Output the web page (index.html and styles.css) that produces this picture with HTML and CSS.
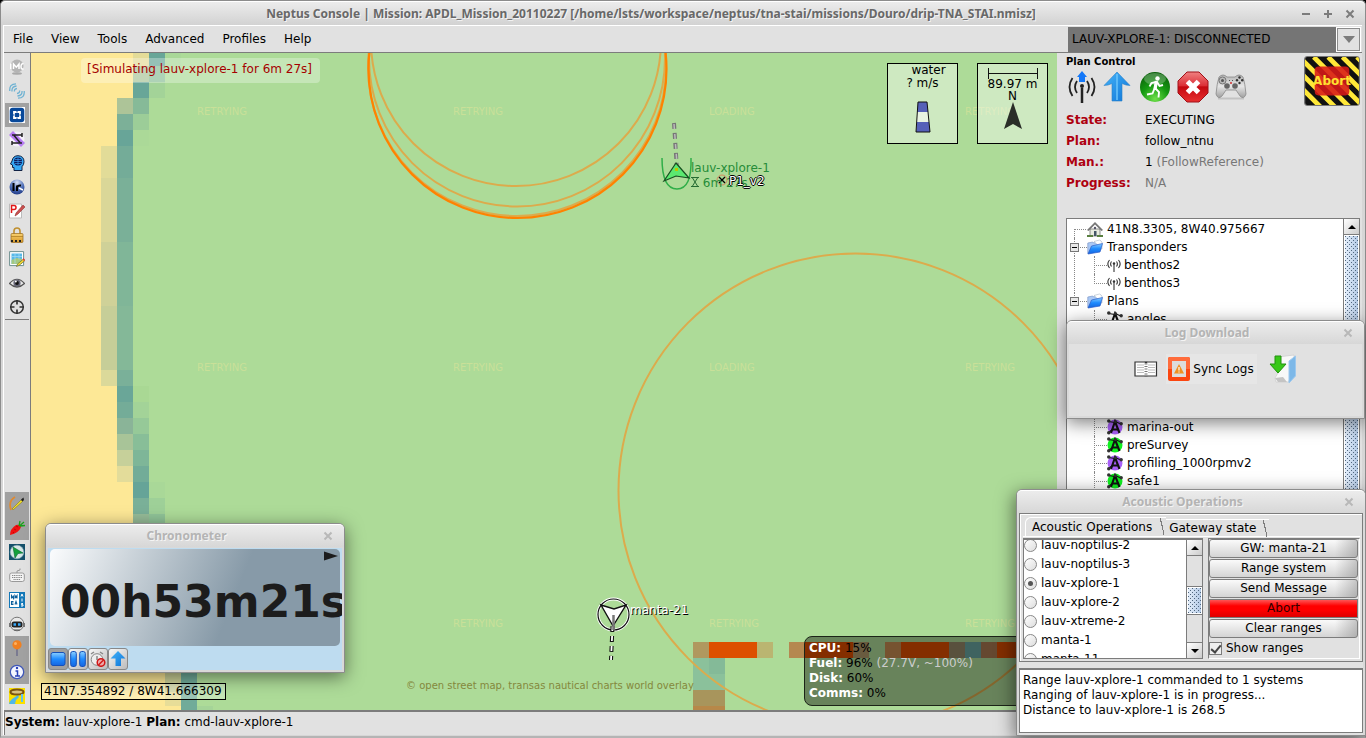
FILE: index.html
```html
<!DOCTYPE html>
<html lang="en">
<head>
<meta charset="utf-8">
<title>Neptus Console</title>
<link rel="stylesheet" href="styles.css">
</head>
<body>
<svg class="defs" aria-hidden="true">
  <defs>
    <linearGradient id="blue" x1="0" y1="0" x2="0" y2="1"><stop offset="0" stop-color="#8cd0ff"/><stop offset=".5" stop-color="#1f8cff"/><stop offset="1" stop-color="#1565e0"/></linearGradient>
    <linearGradient id="sky" x1="0" y1="0" x2="1" y2="1"><stop offset="0" stop-color="#45b4f8"/><stop offset="1" stop-color="#0d74d8"/></linearGradient>
    <linearGradient id="gold" x1="0" y1="0" x2="0" y2="1"><stop offset="0" stop-color="#f8d070"/><stop offset="1" stop-color="#d89a28"/></linearGradient>
    <radialGradient id="green" cx=".5" cy=".9" r=".9"><stop offset="0" stop-color="#6fe04a"/><stop offset=".5" stop-color="#159a12"/><stop offset="1" stop-color="#0a5f0a"/></radialGradient>
    <linearGradient id="red" x1="0" y1="0" x2="0" y2="1"><stop offset="0" stop-color="#f08080"/><stop offset=".45" stop-color="#dc3038"/><stop offset=".5" stop-color="#c40810"/><stop offset="1" stop-color="#e83030"/></linearGradient>
    <linearGradient id="pad" x1="0" y1="0" x2="0" y2="1"><stop offset="0" stop-color="#b4b4b4"/><stop offset=".5" stop-color="#e6e6e6"/><stop offset="1" stop-color="#a0a0a0"/></linearGradient>
    <radialGradient id="orb" cx=".5" cy=".2" r=".9"><stop offset="0" stop-color="#d8e2f5"/><stop offset=".5" stop-color="#5070b8"/><stop offset="1" stop-color="#122a78"/></radialGradient>
    <pattern id="hazard" width="11" height="11" patternUnits="userSpaceOnUse" patternTransform="rotate(-45)"><path d="M0 0h11v6H0z" fill="#111"/><path d="M0 6h11v5H0z" fill="#ffe838"/></pattern>
    <symbol id="i-folder" viewBox="0 0 16 16"><path d="M.8 14.500V4l5-1 1 1 7-2v9z" fill="#a9c8f4" stroke="#7d98c8" stroke-width=".7"/><path d="M7 2.500l5.500-1.500 2.500 2v7z" fill="#fff" stroke="#9ab" stroke-width=".5"/><path d="M1 15l3.500-8 11-2.500-2.500 8.500z" fill="url(#blue)" stroke="#2a5cc8" stroke-width=".7"/></symbol>
    <symbol id="i-trans" viewBox="0 0 14 14"><g fill="none" stroke="#333" stroke-width="1.100"><path d="M7 6v8"/><path d="M4.500 3.500q-1.800 2.500 0 5M9.500 3.500q1.800 2.500 0 5M2.500 2Q-.8 6 2.500 10M11.500 2q3.300 4 0 8"/></g><circle cx="7" cy="5.500" r="1.200" fill="#333"/></symbol>
    <symbol id="i-plan" viewBox="0 0 16 16"><path d="M4 14L8 2.500 12.500 14M5.500 10.500h6" fill="none" stroke="#111" stroke-width="2.100"/><path d="M1.500 2.500L8 3.500M1.500 13.500l4-3M9 3l5 2" fill="none" stroke="#111" stroke-width="1.100"/><g fill="#333"><circle cx="1.800" cy="2" r="1.800"/><circle cx="8.500" cy="2.500" r="1.600"/><circle cx="14.200" cy="4.800" r="1.700"/><circle cx="1.800" cy="13.800" r="1.800"/></g></symbol>
  </defs>
</svg>

<div class="console">
  <header class="titlebar">
    <h1 class="titlebar-text">Neptus Console | Mission: APDL_Mission_20110227 [/home/lsts/workspace/neptus/tna-stai/missions/Douro/drip-TNA_STAI.nmisz]</h1>
    <div class="window-buttons">
      <button aria-label="Minimize"><svg viewBox="0 0 10 10"><path d="M1 5h8"/></svg></button>
      <button aria-label="Maximize"><svg viewBox="0 0 10 10"><path d="M1 5h8M5 1v8"/></svg></button>
      <button aria-label="Close"><svg viewBox="0 0 10 10"><path d="M1.500 1.500l7 7M8.500 1.500l-7 7"/></svg></button>
    </div>
  </header>

  <div class="frame">
    <nav class="menubar">
      <button>File</button><button>View</button><button>Tools</button><button>Advanced</button><button>Profiles</button><button>Help</button>
      <div class="combo">
        <select aria-label="Vehicle"><option>LAUV-XPLORE-1: DISCONNECTED</option></select>
        <span class="combo-arrow"></span>
      </div>
    </nav>

    <div class="workspace">
      <div class="toolbar">
        <div class="tool-group">
          <button aria-label="IMC"><svg viewBox="0 0 16 16"><circle cx="8" cy="7" r="6.500" fill="#b4b4b4"/><ellipse cx="8" cy="14.500" rx="5" ry="1.200" fill="#a9a9a9"/><path d="M1.800 4.500v5.500M4.500 10V5l2.800 3.200L10 5v5M14.500 4.800q-2.500-.6-2.500 2.600t2.500 2.600" fill="none" stroke="#fff" stroke-width="1.500"/></svg></button>
          <button aria-label="Signals"><svg viewBox="0 0 16 16"><g fill="none" stroke="#6fb2d2" stroke-width="1.300"><path d="M.8 8Q0 1 7 .8M3 8.500Q2.500 3.500 7.500 3M5.500 8.500Q5 6 8 5.500M15.200 8q.8 7-6.200 7.200M13 8q.5 4.500-4.500 5M10.500 7.500q.5 2.500-2.500 3"/></g></svg></button>
          <button class="on" aria-label="Map"><svg viewBox="0 0 16 16"><path d="M0 0h16v16H0z" fill="#fff"/><rect x=".7" y=".7" width="14.600" height="14.600" rx="3" fill="#07489a"/><path d="M5 5h6v6H5z" fill="none" stroke="#fff" stroke-width="1.800"/><path d="M7.500 3.500h1v2h-1zM7.500 10.500h1v2h-1zM3.500 7.500h2v1h-2zM10.500 7.500h2v1h-2z" fill="#07489a"/></svg></button>
          <button aria-label="Plan editor"><svg viewBox="0 0 16 16"><circle cx="8" cy="8" r="7.500" fill="#f4f0fa"/><path d="M0 4l4-4 12 12-4 4z" fill="#b67cf2"/><path d="M3 4h10M5 4.500l6 7M3 12h10M3 10v4M13 2v4" stroke="#222" stroke-width="1.500" fill="none"/></svg></button>
          <button aria-label="Mind"><svg viewBox="0 0 16 16"><path d="M5 15.500v-3H3.500V10L1.500 9l1.500-3Q4 .7 9 .7q6 .3 6 6 0 3-2 5v3.800z" fill="#35a8f5" stroke="#124" stroke-width="1"/><circle cx="9" cy="6.500" r="4" fill="#0a1858"/><path d="M5 6.500h8M9 2.500v8M6 4.500h6M6 8.500h6" stroke="#3a9cf0" stroke-width=".7"/></svg></button>
          <button aria-label="Iridium"><svg viewBox="0 0 16 16"><circle cx="8" cy="8" r="7.500" fill="url(#orb)"/><path d="M4.500 4v8M8 12V6.500M8 8q1-2 4-1.500" stroke="#000" stroke-width="2" fill="none"/><path d="M10 9l4 2" stroke="#fff" stroke-width="1.500"/></svg></button>
          <button aria-label="Parameters"><svg viewBox="0 0 16 16"><path d="M.5 1h12v14H.5z" fill="#fff" stroke="#bbb"/><path d="M2.500 10V2.500H5q2 0 2 2t-2 2H3" fill="none" stroke="#e01818" stroke-width="1.500"/><path d="M6 13l1-3 7-8 2 2-7 7z" fill="#c85050" stroke="#933" stroke-width=".6"/></svg></button>
          <button aria-label="Lock"><svg viewBox="0 0 16 16"><path d="M5 7V4q0-3 3-3t3 3v3" fill="none" stroke="#c09030" stroke-width="1.600"/><rect x="2" y="6.500" width="12" height="9" rx="1" fill="url(#gold)" stroke="#96691c" stroke-width=".7"/><path d="M2 9.500h12" stroke="#a87820" stroke-width=".7"/><path d="M2 14h12" stroke="#222" stroke-width="1.800" stroke-dasharray="2 2"/></svg></button>
          <button aria-label="Map edit"><svg viewBox="0 0 16 16"><path d="M.6 .6h14v14H.6z" fill="#fff" stroke="#6f9090"/><path d="M2.500 2.500h10.500v10.500H2.500z" fill="#58b8e8"/><path d="M2.500 9l5-2 5.500 1v5H2.500z" fill="#a4c880"/><path d="M2.500 5.500h10.500M6 2.500v10M10 2.500v6" stroke="#a8dcf6" stroke-width=".7"/><path d="M7.500 15.500l1-2.500 6-5 1.500 1.500-6 5z" fill="#f0dc30" stroke="#553" stroke-width=".6"/><path d="M14 7.800l1.500 1.700" stroke="#e33" stroke-width="1.500"/></svg></button>
          <button aria-label="Eye"><svg viewBox="0 0 16 16"><path d="M.5 8.500Q8 0 15.500 8.500 8 15.500.5 8.500z" fill="#e8e8e8" stroke="#555" stroke-width="1.200"/><circle cx="8" cy="8" r="3.600" fill="#667"/><circle cx="8" cy="8" r="1.900" fill="#111"/><circle cx="6.800" cy="6.600" r="1" fill="#fff"/></svg></button>
          <button aria-label="Target"><svg viewBox="0 0 16 16"><circle cx="8" cy="8" r="6.300" fill="none" stroke="#333" stroke-width="1.500"/><path d="M8 1v4.500M8 10.500V15M1 8h4.500M10.500 8H15" stroke="#333" stroke-width="1.700"/></svg></button>
        </div>
        <div class="tool-group tool-group-low">
          <button class="on" aria-label="Draw"><svg viewBox="0 0 16 16"><path d="M6 1Q-1 5 2 14" fill="none" stroke="#e08a30" stroke-width="1.800"/><path d="M3 13l9-9 1.500 1.500-9 8z" fill="#f2e02a" stroke="#887818" stroke-width=".6"/><path d="M12 3.500L14.500 1.500 15 4l-1.500 1.500z" fill="#222"/></svg></button>
          <button class="on" aria-label="Carrot"><svg viewBox="0 0 16 16"><path d="M1 15Q1 9 7 5q4-1 5 2Q10 13 1 15z" fill="#f01010"/><path d="M10 6l1-5M10.500 6L15 2M11 6l5-.5" stroke="#18a018" stroke-width="1.300"/><path d="M5 9l2 1M7 6l2 1M4 12l1 1" stroke="#a00" stroke-width=".7"/></svg></button>
          <button aria-label="Vehicle"><svg viewBox="0 0 16 16"><path d="M0 0h16v16H0z" fill="#15506a"/><circle cx="8" cy="8" r="6.800" fill="#d6e6e4" stroke="#8ab" stroke-width=".6"/><path d="M4 3l10 6-5 .5L6 14z" fill="#12a03a" stroke="#063" stroke-width=".6"/></svg></button>
          <button aria-label="Keyboard"><svg viewBox="0 0 16 16"><path d="M8 5V3l3-1V.5" fill="none" stroke="#999"/><rect x=".7" y="5" width="14.600" height="8.500" rx="2" fill="#f4f4f4" stroke="#999"/><path d="M3 7.500h10M3 9.500h10M4.500 11.500h7" stroke="#888" stroke-dasharray="1.200 .6"/></svg></button>
          <button aria-label="AIS"><svg viewBox="0 0 16 16"><path d="M0 0h16v16H0z" fill="#1478b8"/><path d="M1 1h9v14H1z" fill="#fff"/><path d="M2.500 6.500V3.500l2 3v-3M6 6.500v-3l1 1.500 1-1.500v3M4.500 9.500h-2v3h2M2.500 11h2M6 12.500l1-3 1 3" fill="none" stroke="#0c5f9c" stroke-width="1.100"/><path d="M12 4.500l1-2.500 1 2.500M13 6.500v3M14 11.500h-1.500v1.200H14V14h-2" fill="none" stroke="#fff"/></svg></button>
          <button aria-label="Robot"><svg viewBox="0 0 16 16"><circle cx="8" cy="8" r="6.800" fill="#e9e9e9" stroke="#777"/><path d="M0 7h2v4H0zM14 7h2v4h-2z" fill="#777"/><rect x="2.500" y="5.500" width="11" height="6" rx="2.500" fill="#222"/><path d="M4.500 8.500h2.500M9 8.500h2.500" stroke="#38a8f8" stroke-width="2.400"/><path d="M5 14h6" stroke="#555"/></svg></button>
          <button class="on" aria-label="Pin"><svg viewBox="0 0 16 16"><path d="M8 8v8" stroke="#668" stroke-width="1.300"/><circle cx="8" cy="4.800" r="4.600" fill="#f08020"/><circle cx="6.500" cy="3.500" r="1.500" fill="#ffb060"/></svg></button>
          <button class="on" aria-label="Info"><svg viewBox="0 0 16 16"><circle cx="8" cy="8" r="6.700" fill="#f4f6ff" stroke="#4058b8" stroke-width="1.300"/><path d="M6.500 7H8.500v5M6 12h5" stroke="#2840b8" stroke-width="1.500" fill="none"/><circle cx="8" cy="4" r="1.200" fill="#2840b8"/></svg></button>
          <button aria-label="Ring"><svg viewBox="0 0 16 16"><path d="M0 0h16v16H0z" fill="#fae000"/><path d="M9 7L3 11q-3 3-3 5h6l1-4 3-3z" fill="#50b8e8"/><ellipse cx="8" cy="4" rx="6.500" ry="2.600" fill="#d8c080" stroke="#7a5410" stroke-width="2"/><path d="M13 6v8" stroke="#60c0f0" stroke-width="2"/></svg></button>
        </div>
      </div>

      <main class="map">
        <svg class="chart" aria-hidden="true">
          <g transform="translate(-31 -53)">
            <path d="M31 53h118v13h-16v32h-16v48h-16v240h16v96h16v60h32v148h16v20H31z" fill="#fde896"/>
            <g shape-rendering="crispEdges">
              <path d="M133 53h16v13h-16z" fill="#e4dc98"/><path d="M149 53h16v13h-16z" fill="#68a698"/><path d="M165 53h16v13h-16z" fill="#a9d898"/>
              <path d="M133 66h16v16h-16z" fill="#a9c498"/><path d="M149 66h16v16h-16z" fill="#8bbf98"/>
              <path d="M133 82h16v16h-16z" fill="#68a698"/><path d="M149 82h16v16h-16z" fill="#a3d398"/>
              <path d="M117 98h16v16h-16z" fill="#adc498"/><path d="M133 98h16v16h-16z" fill="#86ba98"/>
              <path d="M117 114h16v16h-16z" fill="#7cb098"/><path d="M133 114h16v16h-16z" fill="#9ccd98"/>
              <path d="M117 130h16v16h-16z" fill="#68a598"/><path d="M133 130h16v16h-16z" fill="#abd998"/>
              <path d="M101 146h16v32h-16z" fill="#e2dc98"/><path d="M117 146h16v32h-16z" fill="#74ac98"/>
              <path d="M101 178h16v64h-16z" fill="#dad798"/><path d="M117 178h16v64h-16z" fill="#7ab098"/>
              <path d="M101 242h16v64h-16z" fill="#cfd198"/><path d="M117 242h16v64h-16z" fill="#80b698"/>
              <path d="M101 306h16v64h-16z" fill="#c6ce98"/><path d="M117 306h16v64h-16z" fill="#84b898"/>
              <path d="M101 370h16v16h-16z" fill="#dbd99a"/><path d="M117 370h16v16h-16z" fill="#7ab099"/>
              <path d="M117 386h16v16h-16z" fill="#6aa698"/><path d="M133 386h16v16h-16z" fill="#a9d894"/>
              <path d="M117 402h16v16h-16z" fill="#74ac98"/><path d="M133 402h16v16h-16z" fill="#a3d398"/>
              <path d="M117 418h16v16h-16z" fill="#8ab498"/><path d="M133 418h16v16h-16z" fill="#96c998"/>
              <path d="M117 434h16v16h-16z" fill="#a8c498"/><path d="M133 434h16v16h-16z" fill="#88be98"/>
              <path d="M117 450h16v16h-16z" fill="#c6d09a"/><path d="M133 450h16v16h-16z" fill="#7eb698"/>
              <path d="M117 466h16v16h-16z" fill="#e3dc9a"/><path d="M133 466h16v16h-16z" fill="#72ac98"/>
              <path d="M133 482h16v16h-16z" fill="#66a498"/><path d="M149 482h16v16h-16z" fill="#a9d898"/>
              <path d="M133 498h16v16h-16z" fill="#7ab098"/><path d="M149 498h16v16h-16z" fill="#9ed098"/>
              <path d="M133 514h16v16h-16z" fill="#96bc98"/><path d="M149 514h16v16h-16z" fill="#90c498"/>
              <path d="M165 658h16v34h-16z" fill="#cbd097"/><path d="M165 692h16v14h-16z" fill="#e7dd98"/><path d="M181 658h16v53h-16z" fill="#70ab99"/><path d="M197 706h16v5h-16z" fill="#a5d498"/>
              <path d="M693 642h16v16h-16z" fill="#b0985f"/><path d="M709 642h48v16h-48z" fill="#dd5000"/><path d="M757 642h16v16h-16z" fill="#bab571"/>
              <path d="M789 642h16v16h-16z" fill="#b58850"/><path d="M805 642h48v16h-48z" fill="#dd4e00"/><path d="M853 642h16v16h-16z" fill="#b0986a"/>
              <path d="M885 642h16v16h-16z" fill="#c58a50"/><path d="M901 642h48v16h-48z" fill="#dd4e00"/><path d="M949 642h16v16h-16z" fill="#958868"/><path d="M965 642h16v16h-16z" fill="#6aa6a0"/><path d="M981 642h16v16h-16z" fill="#a87850"/><path d="M997 642h60v16h-60z" fill="#dd4e00"/>
              <path d="M693 658h32v32h-32z" fill="#8bc19b"/><path d="M709 658h16v16h-16z" fill="#84ba98"/><path d="M693 690h32v16h-32z" fill="#a8955c"/><path d="M693 706h32v5h-32z" fill="#b78849"/>
            </g>
            <g fill="none" stroke="#dcab4c" stroke-width="2">
              <circle cx="855.500" cy="490.500" r="237"/><circle cx="517" cy="67" r="149"/><circle cx="517" cy="58.500" r="148"/><circle cx="516" cy="41" r="145"/>
            </g>
            <circle cx="517.500" cy="69" r="149" fill="none" stroke="#ff8200" stroke-width="2.200"/>
            <g fill="none" stroke="#777" stroke-width="4"><path d="M674 123l3 47" stroke-dasharray="6 4"/></g>
            <path d="M674 124l3 40" stroke="#bbb" stroke-width="1.500" stroke-dasharray="5 5"/>
            <path d="M662 158q0 31 15 31t14-31" fill="none" stroke="#2fae48" stroke-width="1.500"/>
            <path d="M676 163l-12 18 12-5 13 2z" fill="#5be870" stroke="#174d20" stroke-width="1.200"/>
            <path d="M675 168h3v3h-3z" fill="#b8c800"/>
            <circle cx="722" cy="180" r="5" fill="none" stroke="#d88a60"/><path d="M719 177l6 6M725 177l-6 6" stroke="#000" stroke-width="1.300"/>
            <circle cx="613.500" cy="614.500" r="15.500" fill="none" stroke="#fff" stroke-width="3"/><circle cx="613.500" cy="614.500" r="15.500" fill="none" stroke="#111" stroke-width="1.200"/>
            <path d="M613 616l-2 44" stroke="#111" stroke-width="4" stroke-dasharray="6 4"/><path d="M613 616l-2 44" stroke="#fff" stroke-width="1.800" stroke-dasharray="5 5"/>
            <path d="M601 605l13 4 12-4-13 21z" fill="#fff" stroke="#111" stroke-width="1.400"/><path d="M613.500 615v15" stroke="#777" stroke-width="2.500"/>
          </g>
        </svg>

        <span class="tile c1 r1">RETRYING</span><span class="tile c2 r1">RETRYING</span><span class="tile c3 r1">LOADING</span><span class="tile c4 r1">RETRYING</span>
        <span class="tile c1 r2">RETRYING</span><span class="tile c2 r2">RETRYING</span><span class="tile c3 r2">LOADING</span><span class="tile c4 r2">RETRYING</span>
        <span class="tile c2 r3">RETRYING</span><span class="tile c3 r3">RETRYING</span><span class="tile c4 r3">RETRYING</span>

        <p class="sim-note">[Simulating lauv-xplore-1 for 6m 27s]</p>
        <p class="pin pin-lauv">lauv-xplore-1<br><svg class="glass" viewBox="0 0 8 10"><path d="M0 .5h8M0 9.500h8M1.500 1L4 5l-2.500 4M6.500 1L4 5l2.500 4" fill="none" stroke="#266b33"/></svg> 6m 27s</p>
        <p class="pin pin-p1">P1_v2</p>
        <p class="pin pin-manta">manta-21</p>

        <div class="gauge gauge-water">
          <span class="gauge-name">water</span><span>? m/s</span>
          <svg class="buoy" viewBox="0 0 16 32"><path d="M3 1h9l3 30H1z" fill="#e8f3e2"/><path d="M3 1h9l1 10H2zM2 21h12l1 10H1z" fill="#5560b8"/><path d="M3 1h9l3 30H1z" fill="none" stroke="#111"/></svg>
        </div>
        <div class="gauge gauge-scale">
          <svg class="ruler" viewBox="0 0 52 12"><path d="M1.500 0v11M50.500 0v11M1 5.500h50" fill="none" stroke="#111"/></svg>
          <span>89.97 m</span><span class="north">N</span>
          <svg class="arrow" viewBox="0 0 18 28"><path d="M9 0l9 27-9-5-9 5z" fill="#2a2e28"/></svg>
        </div>

        <p class="coords">41N7.354892 / 8W41.666309</p>
        <p class="credit">© open street map, transas nautical charts world overlay</p>
        <dl class="health">
          <div><dt>CPU:</dt> <dd>15%</dd></div>
          <div><dt>Fuel:</dt> <dd>96% <span>(27.7V, ~100%)</span></dd></div>
          <div><dt>Disk:</dt> <dd>60%</dd></div>
          <div><dt>Comms:</dt> <dd>0%</dd></div>
        </dl>
      </main>

      <aside class="side">
        <section class="plan">
          <div class="plan-top">
            <div>
              <h2>Plan Control</h2>
              <div class="plan-buttons">
                <button aria-label="Send signal"><svg viewBox="0 0 32 32"><g fill="none" stroke="#222" stroke-width="1.800"><path d="M11 10q-4 6 0 12M21 10q4 6 0 12M6.500 7q-6 9 0 18M25.500 7q6 9 0 18"/><path d="M16 17v15" stroke-width="2.500"/></g><circle cx="16" cy="15" r="2" fill="#222"/><path d="M16 0l5 6h-2v5h-6V6h-2z" fill="#1478f8"/></svg></button>
                <button aria-label="Upload plan"><svg viewBox="0 0 32 32"><path d="M16 1l13 13.500q-4 0-8-2V30H11V12.500q-4 2-8 2z" fill="url(#sky)" stroke="#2a80c8" stroke-width=".6"/><path d="M16 3v26" stroke="#6cc4fa" stroke-width="1.500"/></svg></button>
                <button aria-label="Start plan"><svg viewBox="0 0 32 32"><circle cx="16" cy="16" r="15" fill="url(#green)"/><ellipse cx="16" cy="8" rx="11" ry="6" fill="#fff" opacity=".25"/><circle cx="18.500" cy="7.500" r="2.200" fill="#fff"/><path d="M17.500 10l-1.500 8" stroke="#fff" stroke-width="3.400"/><path d="M17 11l-4.500 1-2 3.500M18 11l2.500 4 3.500-1M16 17l4 4-.5 5.500M15.500 17.500l-2 5-5.500 1" fill="none" stroke="#fff" stroke-width="1.900"/></svg></button>
                <button aria-label="Stop plan"><svg viewBox="0 0 32 32"><path d="M10 1h12l9 9v12l-9 9H10l-9-9V10z" fill="url(#red)" stroke="#a01018"/><path d="M10.500 10.500l11 11M21.500 10.500l-11 11" stroke="#fff" stroke-width="5"/></svg></button>
                <button aria-label="Joystick"><svg viewBox="0 0 32 32"><path d="M3 27.500h26" stroke="#c2c2c2" stroke-width="2"/><path d="M4 6q4-4 8 0h8q4-4 8 0 2 6 3 17-2 6-6 2l-4-6H11l-4 6q-4 4-6-2Q2 12 4 6z" fill="url(#pad)" stroke="#888" stroke-width=".8"/><circle cx="7.500" cy="9.500" r="3.500" fill="#bbb" stroke="#777"/><circle cx="7.500" cy="9.500" r="1.500" fill="#555"/><circle cx="12" cy="15" r="2.800" fill="#666"/><circle cx="20" cy="15" r="2.800" fill="#666"/><path d="M14 9.500h1M17 9.500h1" stroke="#555"/><circle cx="16" cy="12" r="1" fill="#d03030"/><g fill="#333"><circle cx="24.500" cy="6.500" r="1.200"/><circle cx="24.500" cy="12" r="1.200"/><circle cx="22" cy="9.200" r="1.200"/><circle cx="27.200" cy="9.200" r="1.200"/></g></svg></button>
              </div>
            </div>
            <button class="abort-big"><svg viewBox="0 0 56 50"><path d="M0 0h56v50H0z" fill="#111"/><path d="M-6 0l56 56M9 0l56 56M24 0l56 56M39 0l56 56M54 0l56 56M-21 0l56 56M-36 0l56 56" stroke="#ffe838" stroke-width="5"/><rect x="10" y="10" width="36" height="30" rx="4" fill="#d81818" opacity=".88"/></svg><span>Abort</span></button>
          </div>
          <dl class="facts">
            <dt>State:</dt><dd>EXECUTING</dd>
            <dt>Plan:</dt><dd>follow_ntnu</dd>
            <dt>Man.:</dt><dd>1 <span>(FollowReference)</span></dd>
            <dt>Progress:</dt><dd><span>N/A</span></dd>
          </dl>
        </section>
        <section class="tree">
          <ul class="tree-list">
            <li class="branch first"><svg viewBox="0 0 16 16"><path d="M3 8h10v7H3z" fill="#e8ece0" stroke="#777" stroke-width=".8"/><path d="M0 9l8-8 8 8-1.500 1L8 3.500 1.500 10z" fill="#777"/><path d="M7 10h2.500v5H7z" fill="#456"/><circle cx="8" cy="7" r="1.200" fill="#556"/><path d="M0 15h6M10 15h6" stroke="#5a8040" stroke-width="2"/></svg>41N8.3305, 8W40.975667</li>
            <li class="branch"><i class="fold"></i><svg viewBox="0 0 16 16"><use href="#i-folder"/></svg>Transponders</li>
            <li class="leaf"><svg viewBox="0 0 14 14"><use href="#i-trans"/></svg>benthos2</li>
            <li class="leaf last"><svg viewBox="0 0 14 14"><use href="#i-trans"/></svg>benthos3</li>
            <li class="branch last"><i class="fold"></i><svg viewBox="0 0 16 16"><use href="#i-folder"/></svg>Plans</li>
            <li class="leaf plan-leaf"><svg viewBox="0 0 16 16"><use href="#i-plan"/></svg>angles</li>
            <li class="gap"></li>
            <li class="leaf plan-leaf violet"><svg viewBox="0 0 16 16"><circle cx="8" cy="8" r="7.500"/><use href="#i-plan"/></svg>marina-out</li>
            <li class="leaf plan-leaf lime"><svg viewBox="0 0 16 16"><circle cx="8" cy="8" r="7.500"/><use href="#i-plan"/></svg>preSurvey</li>
            <li class="leaf plan-leaf violet"><svg viewBox="0 0 16 16"><circle cx="8" cy="8" r="7.500"/><use href="#i-plan"/></svg>profiling_1000rpmv2</li>
            <li class="leaf plan-leaf lime"><svg viewBox="0 0 16 16"><circle cx="8" cy="8" r="7.500"/><use href="#i-plan"/></svg>safe1</li>
          </ul>
          <div class="scroll"><button class="scroll-btn up" aria-label="Scroll up"></button><div class="thumb thumb-fill"></div></div>
        </section>
      </aside>
    </div>

    <footer class="status"><p><b>System:</b> lauv-xplore-1 <b>Plan:</b> cmd-lauv-xplore-1</p></footer>
  </div>
</div>

<section class="dialog chrono">
  <header class="dialog-title"><h2>Chronometer</h2><button aria-label="Close"><svg viewBox="0 0 10 10"><path d="M1.500 1.500l7 7M8.500 1.500l-7 7"/></svg></button></header>
  <div class="chrono-body">
    <div class="chrono-face"><svg class="play" viewBox="0 0 14 10"><path d="M0 .5l14 4.500-14 4.500z" fill="#1c1c1c"/></svg><output>00h53m21s</output></div>
    <div class="chrono-tools">
      <button class="pressed" aria-label="Stop"><svg viewBox="0 0 16 16"><rect x="1" y="1.500" width="14" height="13" rx="2" fill="url(#blue)" stroke="#1550b8"/></svg></button>
      <button aria-label="Pause"><svg viewBox="0 0 16 16"><rect x=".7" y=".5" width="5.600" height="15" rx="2" fill="url(#blue)" stroke="#1550b8"/><rect x="9.700" y=".5" width="5.600" height="15" rx="2" fill="url(#blue)" stroke="#1550b8"/></svg></button>
      <button aria-label="Reset"><svg viewBox="0 0 16 16"><circle cx="7" cy="8.500" r="5.800" fill="#eee" stroke="#888"/><path d="M1 3l3-2M10 1l3 2M7 5v4" stroke="#888" stroke-width="1.500"/><circle cx="11" cy="11.500" r="3.800" fill="#eaa" stroke="#d01818" stroke-width="1.500"/><path d="M8.500 14l5-5" stroke="#d01818" stroke-width="1.500"/></svg></button>
      <button aria-label="Lap"><svg viewBox="0 0 16 16"><path d="M8 0l7.500 7.500H11V15H5.500V7.500H.5z" fill="url(#sky)"/></svg></button>
    </div>
  </div>
</section>

<section class="dialog logs">
  <header class="dialog-title"><h2>Log Download</h2><button aria-label="Close"><svg viewBox="0 0 10 10"><path d="M1.500 1.500l7 7M8.500 1.500l-7 7"/></svg></button></header>
  <div class="logs-body">
    <button aria-label="Log book"><svg class="book" viewBox="0 0 24 18"><path d="M1 2h10l1 1 1-1h9.500v14H1z" fill="#fff" stroke="#333" stroke-width="1.200"/><path d="M3 5h7M3 7.500h7M3 10h7M3 12.500h7M14 5h7M14 7.500h7M14 10h7M14 12.500h7" stroke="#bbb"/><path d="M12 1v16" stroke="#777" stroke-width="3" stroke-dasharray="1 1.500"/></svg></button>
    <button class="sync"><svg class="warn" viewBox="0 0 22 24"><rect width="22" height="24" rx="2" fill="#fb4610"/><path d="M0 2q0-2 2-2h18q2 0 2 2v10H0z" fill="#ff6c3c"/><path d="M4 4h14v16H4z" fill="#ddd"/><path d="M11 7l5 9.500H6z" fill="#f09020"/><path d="M11 10v3.500M11 14.500v1" stroke="#fff" stroke-width="1.200"/></svg>Sync Logs</button>
    <button aria-label="Download"><svg class="down" viewBox="0 0 28 30"><path d="M9 3l16-2v19l-6 8H7l-1-4 3-5z" fill="#f8f8f8" stroke="#ccc" stroke-width=".7"/><path d="M20 7l6.500-5v20L20 29z" fill="#7db8e8" stroke="#9cc8ee"/><path d="M6 24l3 4h9l-4-5z" fill="#c4c4c4"/><path d="M6 2h6v8h5l-8 9-8-9h5z" fill="#38c818" stroke="#229010"/></svg></button>
  </div>
</section>

<section class="dialog acoustic">
  <header class="dialog-title"><h2>Acoustic Operations</h2><button aria-label="Close"><svg viewBox="0 0 10 10"><path d="M1.500 1.500l7 7M8.500 1.500l-7 7"/></svg></button></header>
  <div class="acoustic-body">
    <div class="tabbed">
      <div class="tabs"><button class="tab current">Acoustic Operations</button><button class="tab">Gateway state</button></div>
      <div class="tab-page">
        <div class="systems">
          <div class="system-list">
            <label><input type="radio" name="sys">lauv-noptilus-2</label>
            <label><input type="radio" name="sys">lauv-noptilus-3</label>
            <label><input type="radio" name="sys" checked>lauv-xplore-1</label>
            <label><input type="radio" name="sys">lauv-xplore-2</label>
            <label><input type="radio" name="sys">lauv-xtreme-2</label>
            <label><input type="radio" name="sys">manta-1</label>
            <label><input type="radio" name="sys">manta-11</label>
          </div>
          <div class="scroll"><button class="scroll-btn up" aria-label="Scroll up"></button><div class="track"><div class="thumb"></div></div><button class="scroll-btn down-btn" aria-label="Scroll down"></button></div>
        </div>
        <div class="commands">
          <button>GW: manta-21</button><button>Range system</button><button>Send Message</button><button class="danger">Abort</button><button>Clear ranges</button>
          <label><input type="checkbox" checked>Show ranges</label>
        </div>
      </div>
    </div>
    <textarea class="log" aria-label="Messages" readonly>Range lauv-xplore-1 commanded to 1 systems
Ranging of lauv-xplore-1 is in progress...
Distance to lauv-xplore-1 is 268.5</textarea>
  </div>
</section>
</body>
</html>
```
FILE: styles.css
```css
* { box-sizing: border-box; }
body, h1, h2, p, ul, dl, dd { margin: 0; padding: 0; }
body {
  height: 100vh;
  overflow: hidden;
  position: relative;
  background: #000;
  color: #000;
  font: 12px/15px "DejaVu Sans", sans-serif;
}
button, select, textarea, input { font: inherit; color: inherit; margin: 0; }
button { border: 0; padding: 0; background: none; }
svg { display: block; }
.defs { position: absolute; width: 0; height: 0; }

.console {
  height: 100%;
  display: flex;
  flex-direction: column;
  background: #d6d6d6;
  border: 1px solid #8c8c8c;
  border-bottom: 2px solid #b4b4b4;
  border-radius: 5px 5px 0 0;
}
.titlebar {
  height: 24px;
  display: flex;
  align-items: center;
  background: linear-gradient(#ececec, #d2d2d2);
  border-top: 1px solid #fff;
  border-radius: 5px 5px 0 0;
  padding: 0 6px 0 0;
}
.titlebar-text {
  flex: 1;
  text-align: center;
  font: bold 12px/18px "Noto Sans", sans-serif;
  color: #686868;
  text-shadow: 1px 1px #f4f4f4;
  white-space: nowrap;
}
.window-buttons { display: flex; gap: 12px; padding-right: 4px; }
.window-buttons svg, .dialog-title button svg { width: 10px; height: 10px; fill: none; stroke: #7c7c7c; stroke-width: 2; }

.frame { flex: 1; min-height: 0; margin: 0 3px 1px 2px; display: flex; flex-direction: column; background: #e1e1e1; border-left: 1px solid #fff; }
.menubar { height: 28px; display: flex; gap: 2px; align-items: center; border-top: 1px solid #fff; border-bottom: 1px solid #7c7c7c; padding: 0 1px; }
.menubar > button { padding: 0 8px; height: 24px; }
.combo { width: 293px; height: 25px; margin-left: auto; display: flex; background: #757575; }
.combo select { flex: 1; appearance: none; border: 0; border-radius: 0; padding: 0 4px; background: #757575; }
.combo-arrow { width: 25px; border: 1px solid #fff; outline: 1px solid #8c8c8c; outline-offset: -2px; background: #e1e1e1; display: grid; place-items: center; }
.combo-arrow::after { content: ""; border: 6px solid transparent; border-top: 7px solid #7c7c7c; border-bottom: 0; }

.workspace { flex: 1; min-height: 0; display: flex; }
.toolbar { width: 27px; display: flex; flex-direction: column; justify-content: space-between; border-right: 1px solid #7c7c7c; padding: 2px 1px; }
.tool-group { display: flex; flex-direction: column; }
.tool-group:first-child { border-bottom: 1px solid #7c7c7c; }
.tool-group button { height: 24px; display: grid; place-items: center; }
.tool-group .on { background: #a1a1a1; }
.tool-group svg { width: 16px; height: 16px; }

.map { flex: 1; min-width: 0; position: relative; overflow: hidden; background: #addb98; }
.chart { width: 100%; height: 100%; }
.tile { position: absolute; font-size: 10px; line-height: 12px; color: #c9e098; }
.c1 { left: 166px; } .c2 { left: 422px; } .c3 { left: 678px; } .c4 { left: 934px; }
.r1 { top: 53px; } .r2 { top: 309px; } .r3 { top: 565px; }
.sim-note { position: absolute; left: 50px; top: 5px; padding: 4px 8px 6px 6px; border-radius: 4px; background: rgba(255,255,255,.3); color: #a60000; white-space: nowrap; }
.pin { position: absolute; white-space: nowrap; }
.pin-lauv { left: 660px; top: 108px; color: #268c38; }
.glass { display: inline-block; width: 8px; height: 10px; }
.pin-p1 { left: 698px; top: 121px; color: #fff; text-shadow: 1px 0 #000, -1px 0 #000, 0 1px #000, 0 -1px #000; }
.pin-manta { left: 599px; top: 550px; color: #fff; text-shadow: 1px 1px #000; }
.gauge { position: absolute; top: 10px; width: 71px; height: 81px; border: 1px solid #000; background: rgba(255,255,255,.4); display: flex; flex-direction: column; align-items: center; line-height: 13px; }
.gauge-water { right: 99px; }
.gauge-scale { right: 9px; }
.gauge-name { padding-left: 12px; }
.buoy { width: 16px; height: 32px; margin-top: 11px; flex: none; }
.ruler { width: 52px; height: 12px; margin-top: 4px; margin-bottom: -2px; flex: none; }
.north { line-height: 11px; }
.arrow { width: 18px; height: 28px; flex: none; }
.coords { position: absolute; left: 10px; bottom: 10px; border: 1px solid #000; background: rgba(255,255,255,.3); padding: 0 3px 0 2px; white-space: nowrap; }
.credit { position: absolute; left: 375px; bottom: 18px; font-size: 10px; line-height: 12px; color: #84883c; white-space: nowrap; }
.health { position: absolute; right: 4px; bottom: 4px; width: 249px; padding: 4px; border: 1px solid #1c2418; border-radius: 8px; background: rgba(0,0,0,.4); }
.health dt, .health dd { display: inline; }
.health dt { font-weight: bold; color: #fff; }
.health dd { color: #000; }
.health span { color: #ccc; }

.side { width: 305px; display: flex; flex-direction: column; padding: 3px 2px 0 9px; }
.plan-top { display: flex; justify-content: space-between; }
.side h2 { font-size: 10px; line-height: 12px; }
.plan-buttons { display: flex; gap: 6px; padding-top: 3px; }
.plan-buttons svg { width: 32px; height: 32px; }
.plan-buttons button:first-child { margin-right: -3px; }
.abort-big { width: 56px; height: 50px; display: grid; place-items: center; border: 1px solid #777; border-radius: 3px; overflow: hidden; }
.abort-big svg, .abort-big span { grid-area: 1 / 1; }
.abort-big svg { width: 100%; height: 100%; }
.abort-big span { z-index: 1; font-weight: bold; color: #ffe030; }
.facts { display: grid; grid-template-columns: 79px 1fr; line-height: 21px; padding-top: 4px; }
.facts dt { font-weight: bold; color: #ae0010; }
.facts span { color: #777; }
.tree { flex: 1; min-height: 0; margin-top: 24px; display: flex; border: 1px solid #7c7c7c; background: #fff; overflow: hidden; }
.tree-list { flex: 1; list-style: none; padding-top: 1px; }
.tree-list li { height: 18px; display: flex; align-items: center; gap: 4px; position: relative; white-space: nowrap; }
.tree-list svg { width: 16px; height: 16px; }
.branch { padding-left: 20px; }
.leaf { padding-left: 40px; }
.leaf:not(.plan-leaf) { gap: 3px; }
.leaf:not(.plan-leaf) svg { width: 14px; height: 14px; }
.tree-list li::before { content: ""; position: absolute; left: 7px; width: 12px; top: 0; height: 9px; border-bottom: 1px dotted #888; border-left: 1px dotted #888; }
.tree-list .first::before { border-left: 0; }
.tree-list .leaf::before { left: 27px; }
.tree-list li:not(.last):not(.gap)::after { content: ""; position: absolute; left: 7px; top: 9px; bottom: 0; border-left: 1px dotted #888; }
.tree-list .leaf:not(.last)::after { left: 27px !important; }
.tree-list .leaf:not(.plan-leaf) { background: repeating-linear-gradient(#888 0 1px, transparent 1px 2px) 7px 0 / 1px 100% no-repeat; }
.tree-list .gap { height: 90px; }
.tree-list .gap::before { display: none; }
.fold { position: absolute; left: 3px; top: 5px; width: 9px; height: 9px; border: 1px solid #777; background: #e8e8e8; z-index: 1; }
.fold::after { content: ""; position: absolute; left: 1px; right: 1px; top: 3px; height: 1px; background: #000; }
.violet circle:first-child { fill: #a860f8; }
.lime circle:first-child { fill: #10f020; }

.scroll { width: 16px; display: flex; flex-direction: column; border-left: 1px solid #7c7c7c; background: #e1e1e1; }
.scroll-btn { height: 16px; display: grid; place-items: center; border-bottom: 1px solid #7c7c7c; background: linear-gradient(135deg, #fff, #ccc); flex: none; }
.scroll-btn::after { content: ""; border: 4px solid transparent; }
.up::after { border-bottom: 4px solid #000; border-top: 0; }
.down-btn { border-bottom: 0; border-top: 1px solid #7c7c7c; }
.down-btn::after { border-top: 4px solid #000; border-bottom: 0; }
.thumb {
  border: 1px solid #fff;
  background:
    conic-gradient(from 270deg at 1px 1px, #50667e 25%, transparent 0) 0 0 / 4px 4px,
    conic-gradient(from 270deg at 1px 1px, #50667e 25%, transparent 0) 2px 2px / 4px 4px,
    linear-gradient(90deg, #e4eefa, #b4cae6);
}
.thumb-fill { flex: 1; }

.status { height: 25px; border-top: 2px solid #7c7c7c; border-left: 1px solid #7c7c7c; padding: 3px 0 0; }

.dialog { position: absolute; border: 1px solid #8c8c8c; border-radius: 6px 6px 0 0; background: #d9d9d9; box-shadow: 0 4px 18px rgba(0,0,0,.5); display: flex; flex-direction: column; }
.dialog-title { height: 23px; flex: none; display: flex; align-items: center; padding: 0 11px 0 4px; border-radius: 5px 5px 0 0; border-top: 1px solid #fff; background: linear-gradient(#ececec, #d7d7d7); }
.dialog-title h2 { flex: 1; text-align: center; font: bold 12px/18px "Noto Sans", sans-serif; color: #b4b4b4; text-shadow: 1px 1px #f4f4f4; }
.dialog-title button svg { stroke: #b8b8b8; }

.chrono { left: 45px; bottom: 65px; width: 300px; height: 150px; }
.chrono-body { flex: 1; margin: 1px 2px 2px; padding: 1px 2px 0; background: #bedcf0; display: flex; flex-direction: column; overflow: hidden; }
.chrono-face { height: 97px; border-radius: 5px; background: linear-gradient(112deg, #fbfcfd, #879aa8 62%); position: relative; white-space: nowrap; padding: 26px 0 0 10px; margin: 0 0 2px; }
.chrono-face output { display: block; font: bold 44px/54px "DejaVu Sans", sans-serif; color: #1c1c1c; }
.play { position: absolute; right: 2px; top: 2px; width: 14px; height: 10px; }
.chrono-tools { display: flex; margin-left: -2px; }
.chrono-tools button { width: 20px; height: 22px; border: 1px solid #888; border-radius: 3px; display: grid; place-items: center; background: linear-gradient(135deg, #f8f8f8, #bbb); }
.chrono-tools .pressed { background: #a0a0a0; }
.chrono-tools svg { width: 16px; height: 16px; }

.logs { right: 1px; top: 320px; width: 299px; height: 99px; }
.logs-body { flex: 1; margin: 0 2px 2px; background: #e1e1e1; display: flex; justify-content: center; align-items: flex-start; padding: 10px 0 0 0; gap: 8px; }
.logs-body button { height: 30px; display: flex; align-items: center; gap: 3px; }
.logs-body .sync { padding: 0 3px 0 2px; background: #e6e6e6; }
.book { width: 24px; height: 18px; }
.warn { width: 22px; height: 24px; }
.down { width: 28px; height: 30px; margin-left: 4px; }

.acoustic { right: 0; bottom: 2px; width: 350px; height: 247px; box-shadow: -2px 4px 18px rgba(0,0,0,.5); }
.acoustic-body { flex: 1; min-height: 0; margin: 0 2px 0 2px; display: flex; flex-direction: column; gap: 6px; background: #e1e1e1; }
.tabbed { border: 1px solid #7c7c7c; box-shadow: inset 1px 1px #fff; padding: 3px 2px 2px 3px; height: 149px; flex: none; display: flex; flex-direction: column; }
.tabs { display: flex; align-items: flex-end; height: 19px; padding-left: 2px; }
.tab { height: 17px; padding: 0 13px 0 3px; border-top: 1px solid #fff; position: relative; }
.tab::after { content: ""; position: absolute; right: 2px; top: 0; width: 4px; height: 17px; background: linear-gradient(77deg, transparent 45%, #7c7c7c 45% 60%, transparent 60%); }
.current { height: 19px; padding: 0 14px 0 6px; border-left: 1px solid #fff; border-top-left-radius: 6px; }
.tab-page { flex: 1; min-height: 0; display: flex; gap: 5px; border-top: 1px solid #fff; padding-top: 1px; }
.systems { flex: 0 0 180px; display: flex; border: 1px solid #7c7c7c; border-width: 2px 1px 1px 1px; background: #fff; overflow: hidden; }
.system-list { flex: 1; margin-top: -4px; }
.system-list label { display: flex; align-items: center; height: 19px; gap: 4px; white-space: nowrap; }
.system-list input { appearance: none; width: 13px; height: 13px; border: 1px solid #888; border-radius: 50%; background: linear-gradient(135deg, #fff, #ddd); display: grid; place-items: center; }
.system-list input:checked::after { content: ""; width: 5px; height: 5px; border-radius: 50%; background: #555; }
.track { flex: 1; display: flex; flex-direction: column; }
.track .thumb { height: 27px; margin-top: 31px; outline: 1px solid #7c7c7c; }
.commands { flex: 1; display: flex; flex-direction: column; gap: 1px; border: 1px solid #7c7c7c; border-color: #7c7c7c #fff #fff #7c7c7c; padding-right: 1px; }
.commands button { height: 19px; flex: none; border: 1px solid #7c7c7c; border-radius: 3px; background: linear-gradient(90deg, transparent 85%, rgba(120,120,120,.4)), linear-gradient(#fafafa, #d4d4d4); }
.commands .danger { background: linear-gradient(#f55, #f00 35%, #f00 60%, #d00); color: #300; border-radius: 0; }
.commands label { display: flex; align-items: center; gap: 4px; height: 21px; }
.commands input { appearance: none; width: 13px; height: 13px; border: 1px solid #7c7c7c; background: #eee; display: grid; place-items: center; }
.commands input:checked::after { content: ""; width: 4px; height: 8px; border: solid #444; border-width: 0 2px 2px 0; transform: rotate(40deg); margin-bottom: 2px; }
.log { flex: 1; min-height: 0; resize: none; border: 1px solid #7c7c7c; border-width: 2px 1px 1px 1px; outline: 0; background: #fff; padding: 3px; margin-bottom: 2px; line-height: 15px; overflow: hidden; white-space: pre; }
```
